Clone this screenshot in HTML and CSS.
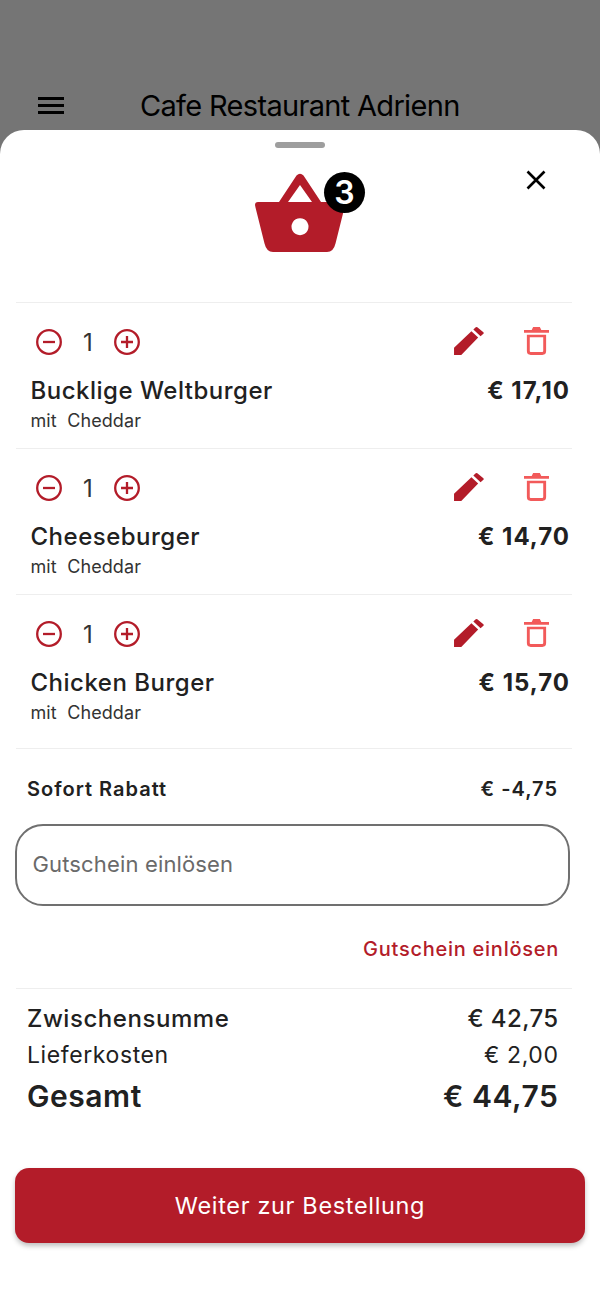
FILE: index.html
```html
<!DOCTYPE html>
<html lang="de">
<head>
<meta charset="utf-8">
<title>Warenkorb</title>
<link rel="stylesheet" href="styles.css">
</head>
<body>
<header class="topbar">
  <svg class="menu" viewBox="0 0 26 17"><path d="M0 0h26v3H0zM0 7h26v3H0zM0 14h26v3H0z"/></svg>
  <h1 class="title">Cafe Restaurant Adrienn</h1>
</header>
<main class="sheet">
  <div class="handle"></div>
  <div class="head">
    <div class="basket">
      <svg class="basket-icon" viewBox="0 0 90 79"><path fill-rule="evenodd" d="M24 29 41.500 2.500Q45-1 48.500 2.500L66 29h21q3 0 3 3l-.5 2.500-9 36Q78.500 79 72 79H18q-6.500 0-8.500-8.500l-9-36L0 32q0-3 3-3zM33 29h24L45 12zM45 45.200a8.500 8.500 0 1 0 .01 0z"/></svg>
      <span class="badge">3</span>
    </div>
    <svg class="close" viewBox="0 0 20 20"><path d="M1.500 1.500l17 17M18.500 1.500l-17 17"/></svg>
  </div>

  <section class="item">
    <div class="controls">
      <svg class="round" viewBox="0 0 26 26"><circle cx="13" cy="13" r="11.800"/><path d="M7 13h12"/></svg>
      <span class="qty">1</span>
      <svg class="round" viewBox="0 0 26 26"><circle cx="13" cy="13" r="11.800"/><path d="M7 13h12M13 7v12"/></svg>
      <svg class="pencil" viewBox="0 0 31 29"><path d="M0 29v-7.500L18 4.500l7 6.500L7.500 29zM20 2.500 22.500.3q.8-.6 1.600 0l6.300 5.200q.8.800 0 1.600L27.500 9.500z"/></svg>
      <svg class="trash" viewBox="0 0 26 29"><path d="M0 3h8l1.500-3h7L18 3h8v3H0zM3 8h20v17q0 4-4 4H7q-4 0-4-4zm3 2.500V25q0 1 1 1h12q1 0 1-1V10.500z" fill-rule="evenodd"/></svg>
    </div>
    <div class="line"><span class="name">Bucklige Weltburger</span><span class="price">€ 17,10</span></div>
    <div class="extra">mit&nbsp; Cheddar</div>
  </section>

  <section class="item">
    <div class="controls">
      <svg class="round" viewBox="0 0 26 26"><circle cx="13" cy="13" r="11.800"/><path d="M7 13h12"/></svg>
      <span class="qty">1</span>
      <svg class="round" viewBox="0 0 26 26"><circle cx="13" cy="13" r="11.800"/><path d="M7 13h12M13 7v12"/></svg>
      <svg class="pencil" viewBox="0 0 31 29"><path d="M0 29v-7.500L18 4.500l7 6.500L7.500 29zM20 2.500 22.500.3q.8-.6 1.600 0l6.300 5.200q.8.800 0 1.600L27.500 9.500z"/></svg>
      <svg class="trash" viewBox="0 0 26 29"><path d="M0 3h8l1.500-3h7L18 3h8v3H0zM3 8h20v17q0 4-4 4H7q-4 0-4-4zm3 2.500V25q0 1 1 1h12q1 0 1-1V10.500z" fill-rule="evenodd"/></svg>
    </div>
    <div class="line"><span class="name">Cheeseburger</span><span class="price">€ 14,70</span></div>
    <div class="extra">mit&nbsp; Cheddar</div>
  </section>

  <section class="item item-last">
    <div class="controls">
      <svg class="round" viewBox="0 0 26 26"><circle cx="13" cy="13" r="11.800"/><path d="M7 13h12"/></svg>
      <span class="qty">1</span>
      <svg class="round" viewBox="0 0 26 26"><circle cx="13" cy="13" r="11.800"/><path d="M7 13h12M13 7v12"/></svg>
      <svg class="pencil" viewBox="0 0 31 29"><path d="M0 29v-7.500L18 4.500l7 6.500L7.500 29zM20 2.500 22.500.3q.8-.6 1.600 0l6.300 5.200q.8.800 0 1.600L27.500 9.500z"/></svg>
      <svg class="trash" viewBox="0 0 26 29"><path d="M0 3h8l1.500-3h7L18 3h8v3H0zM3 8h20v17q0 4-4 4H7q-4 0-4-4zm3 2.500V25q0 1 1 1h12q1 0 1-1V10.500z" fill-rule="evenodd"/></svg>
    </div>
    <div class="line"><span class="name">Chicken Burger</span><span class="price">€ 15,70</span></div>
    <div class="extra">mit&nbsp; Cheddar</div>
  </section>

  <div class="discount"><span>Sofort Rabatt</span><span>€ -4,75</span></div>
  <div class="voucher-input">Gutschein einlösen</div>
  <div class="voucher-link">Gutschein einlösen</div>

  <div class="totals">
    <div class="row row-sub"><span>Zwischensumme</span><span class="amount">€ 42,75</span></div>
    <div class="row row-fee"><span>Lieferkosten</span><span>€ 2,00</span></div>
    <div class="row row-total"><span>Gesamt</span><span>€ 44,75</span></div>
  </div>

  <button class="cta">Weiter zur Bestellung</button>
</main>
</body>
</html>
```
FILE: styles.css
```css
* { box-sizing: border-box; }
html, body { margin: 0; padding: 0; }
body {
  width: 600px;
  height: 1298px;
  overflow: hidden;
  background: #757575;
  font-family: Inter, "Liberation Sans", sans-serif;
  color: #212121;
}
.topbar {
  height: 130px;
  padding: 89px 0 0 38px;
  display: flex;
  align-items: flex-start;
}
.menu { width: 26px; height: 17px; margin-top: 8px; fill: #000; }
.title {
  margin: 0 0 0 76px;
  font-size: 29px;
  line-height: 34px;
  font-weight: 400;
  letter-spacing: -.68px;
  color: #000;
  white-space: nowrap;
}
.sheet {
  height: 1168px;
  background: #fff;
  border-radius: 24px 24px 0 0;
  padding: 12px 28px 0 16px;
}
.handle {
  width: 50px;
  height: 6px;
  margin-left: 259px;
  border-radius: 3px;
  background: #9e9e9e;
}
.head {
  height: 155px;
  width: 556px;
  padding-top: 25px;
  display: flex;
  border-bottom: 1px solid #eee;
}
.basket { margin-left: 238.500px; width: 112px; height: 80px; display: flex; }
.basket-icon { width: 90px; height: 79px; fill: #b31c29; }
.badge {
  width: 41px;
  height: 41px;
  margin: -1px 0 0 -20.500px;
  border-radius: 50%;
  background: #000;
  color: #fff;
  font-size: 32px;
  font-weight: 600;
  line-height: 41px;
  text-align: center;
}
.close {
  width: 20px;
  height: 20px;
  margin: -3px 0 0 159.500px;
  fill: none;
  stroke: #000;
  stroke-width: 2.600;
}
.item {
  width: 556px;
  height: 146px;
  border-bottom: 1px solid #eee;
  padding: 26px 2px 0 14.500px;
}
.item-last { height: 154px; }
.controls { display: flex; align-items: center; height: 26px; padding-left: 5.500px; }
.round { width: 26px; height: 26px; fill: none; stroke: #b31c29; stroke-width: 2.300; }
.qty { width: 52px; text-align: center; font-size: 24px; color: #333; }
.pencil { width: 30px; height: 28px; margin: 0 0 2px 314px; fill: #b31c29; }
.trash { width: 25px; height: 28px; margin: 0 0 2px 39.500px; fill: #f25a5a; }
.line {
  display: flex;
  justify-content: space-between;
  align-items: baseline;
  margin-top: 19.500px;
  line-height: 32px;
}
.name { font-size: 24px; font-weight: 550; letter-spacing: .5px; }
.price { font-size: 24px; font-weight: 650; letter-spacing: 1px; }
.extra { font-size: 18px; line-height: 24px; color: #333; margin-top: 2.500px; letter-spacing: .1px; }
.discount {
  width: 556px;
  display: flex;
  justify-content: space-between;
  padding: 27px 14px 0 11px;
  font-size: 20px;
  line-height: 26px;
  font-weight: 600;
  letter-spacing: 1px;
}
.voucher-input {
  width: 555px;
  height: 82px;
  margin: 22px 0 0 -1px;
  border: 2px solid #707070;
  border-radius: 28px;
  padding-left: 15.500px;
  font-size: 22px;
  line-height: 77px;
  letter-spacing: .15px;
  color: #6a6a6a;
}
.voucher-link {
  width: 543px;
  margin-top: 30px;
  text-align: right;
  font-size: 20px;
  line-height: 26px;
  font-weight: 450;
  letter-spacing: .74px;
  color: #b31c29;
}
.totals {
  width: 556px;
  margin-top: 26px;
  border-top: 1px solid #eee;
  padding: 14px 13.500px 0 11px;
}
.row { display: flex; justify-content: space-between; }
.row-sub { font-size: 24px; line-height: 32px; font-weight: 550; letter-spacing: .55px; }
.amount { letter-spacing: .4px; }
.row-fee { font-size: 23px; line-height: 32px; margin-top: 4px; letter-spacing: .6px; }
.row-total { font-size: 30px; line-height: 40px; font-weight: 600; margin-top: 5px; letter-spacing: .55px; }
.cta {
  display: block;
  width: 570px;
  height: 75px;
  margin: 52px 0 0 -1px;
  border: 0;
  border-radius: 14px;
  background: #b31c29;
  color: #fff;
  font: 400 23.500px Inter, "Liberation Sans", sans-serif;
  letter-spacing: .66px;
  box-shadow: 0 3px 5px rgba(0,0,0,.25);
}
```
